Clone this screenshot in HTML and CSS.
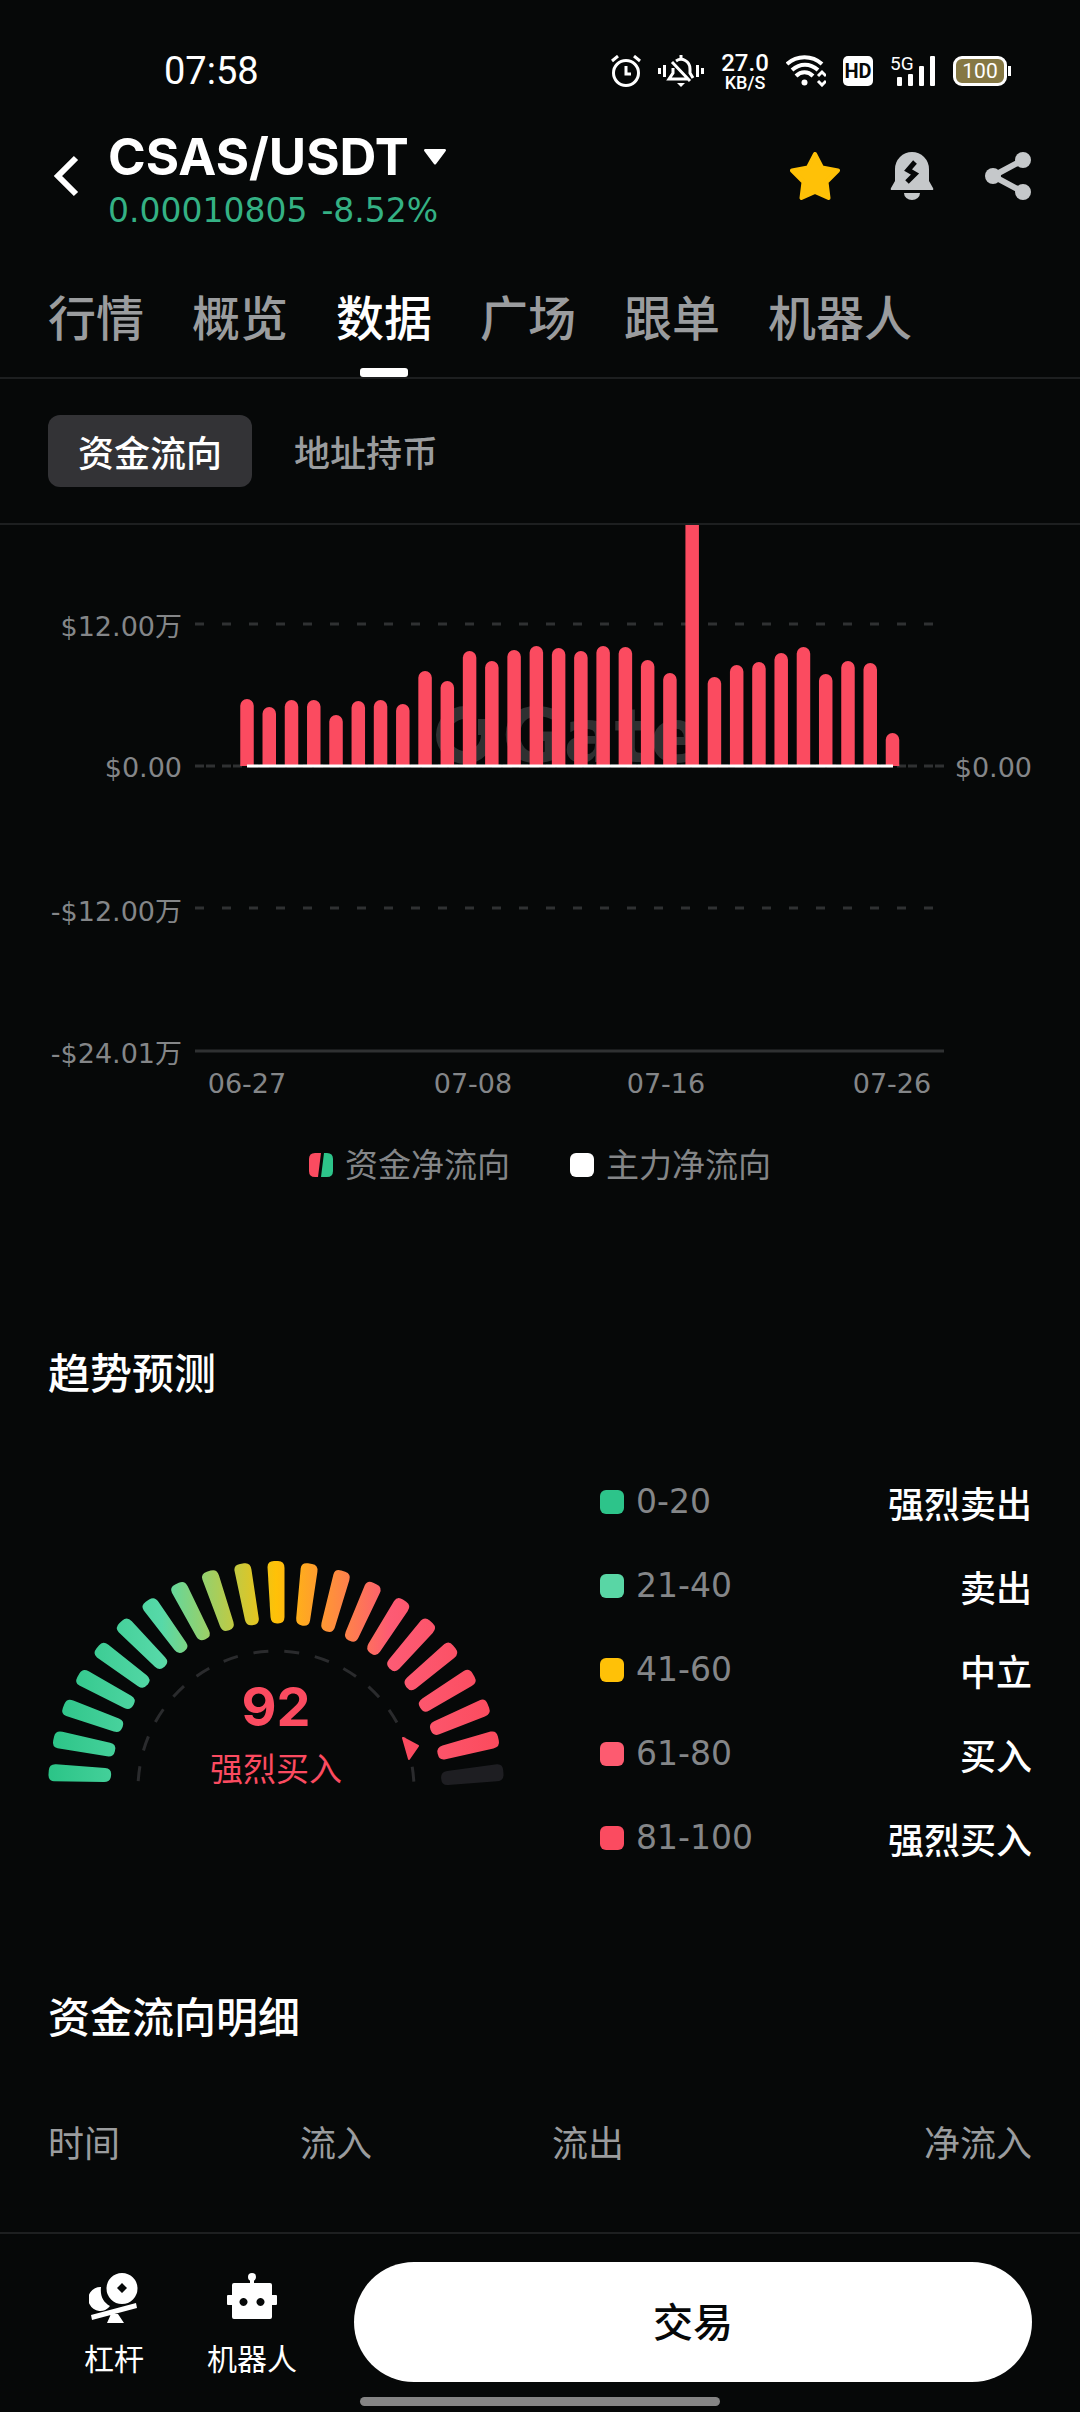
FILE: index.html
```html
<!DOCTYPE html>
<html lang="zh-CN">
<head>
  <meta charset="UTF-8" />
  <meta name="viewport" content="width=device-width, initial-scale=1.0">
  <title>CSAS/USDT - 数据</title>
  <link rel="stylesheet" href="styles.css">
</head>
<body>
  <!-- Status bar -->
  <div class="status-bar">
    <span class="clock">07:58</span>
    <div class="status-icons">
      <svg width="30" height="32" viewBox="0 0 30 32" fill="none" stroke="#fff" stroke-width="3">
        <circle cx="15" cy="18" r="12.500" />
        <path d="M15 11v8h5M1 6l6-5M29 6l-6-5" />
      </svg>
      <svg width="46" height="32" viewBox="0 0 46 32" fill="none" stroke="#fff" stroke-width="3">
        <path d="M1.500 13v6M6.500 10v12M39.500 10v12M44.500 13v6" />
        <path d="M15 13v5l-4 6h19M18 6c6-4 14 0 14 8v4l3 5M14 7l18 19" />
        <path d="M23 0v4" />
        <path d="M19 28h8l-4 4z" fill="#fff" stroke="none" />
      </svg>
      <div class="net-speed"><b>27.0</b><span>KB/S</span></div>
      <svg width="40" height="32" viewBox="0 0 40 32" fill="none" stroke="#fff" stroke-width="4">
        <path d="M1 9c10-9 25-9 35 0M6 15c8-7 18-7 26 0M10 21c5-5 12-5 17 0" />
        <circle cx="18.500" cy="27.500" r="3" fill="#fff" stroke="none" />
        <path d="M32 21l4-4 4 4M32 26l4 4 4-4" stroke-width="3" />
      </svg>
      <span class="hd">HD</span>
      <div class="signal">
        <span>5G</span>
        <svg width="40" height="30" viewBox="0 0 40 30" fill="#fff">
          <rect x="1" y="21" width="5" height="9" rx="1" />
          <rect x="12" y="18" width="5" height="12" rx="1" />
          <rect x="23" y="10" width="5" height="20" rx="1" />
          <rect x="34" y="0" width="5" height="30" rx="1" />
        </svg>
      </div>
      <span class="battery">100</span>
    </div>
  </div>

  <!-- Pair header -->
  <header class="header">
    <button class="icon-btn" aria-label="返回">
      <svg width="32" height="42" viewBox="0 0 32 42" fill="none" stroke="#fff" stroke-width="6">
        <path d="M28 3L10 21l18 18" />
      </svg>
    </button>
    <div class="pair">
      <button class="pair-name">CSAS/USDT
        <svg width="22" height="16" viewBox="0 0 22 16" fill="#fff"><path d="M1 0h20q2 1 0 3L12 15q-1 1-2 0L1 3q-2-2 0-3z" /></svg>
      </button>
      <div class="pair-price"><span>0.00010805</span><span>-8.52%</span></div>
    </div>
    <div class="header-actions">
      <button class="icon-btn" aria-label="收藏">
        <svg width="50" height="48" viewBox="0 0 50 48" fill="#ffc107" stroke="#ffc107" stroke-width="4" stroke-linejoin="round">
          <path d="M25 2l7 13.500 16 3-11.500 11.500 2 16-13.500-6-13.500 6 2-16L2 18.500l16-3z" />
        </svg>
      </button>
      <button class="icon-btn" aria-label="提醒">
        <svg width="44" height="48" viewBox="0 0 44 48" fill="#c5c8ca">
          <path d="M5 17a17 17 0 0 1 34 0v12l4 7q1 2-1 2H2q-2 0-1-2l4-7z" />
          <path d="M14 41h16a8 7 0 0 1-16 0z" />
          <path d="M25 10l-7 8 7 4-8 8" fill="none" stroke="#060808" stroke-width="5" />
        </svg>
      </button>
      <button class="icon-btn" aria-label="分享">
        <svg width="48" height="48" viewBox="0 0 48 48" fill="#c5c8ca">
          <path d="M39 8L9 24l30 16" fill="none" stroke="#c5c8ca" stroke-width="6" />
          <circle cx="9" cy="24" r="8" /><circle cx="39" cy="8" r="8" /><circle cx="39" cy="40" r="8" />
        </svg>
      </button>
    </div>
  </header>

  <nav class="tabs">
    <a href="#">行情</a>
    <a href="#">概览</a>
    <a href="#" class="active">数据</a>
    <a href="#">广场</a>
    <a href="#">跟单</a>
    <a href="#">机器人</a>
  </nav>

  <div class="sub-tabs">
    <button class="active">资金流向</button>
    <button>地址持币</button>
  </div>

  <main>
    <!-- Fund flow chart -->
    <section class="flow">
      <svg class="flow-chart" viewBox="0 0 1080 582" role="img" aria-label="资金净流向">
        <g class="watermark">
          <path d="M465 181a29 29 0 1 0 29 29h-13a16 16 0 1 1-16-16z" />
          <path d="M478 194h16v16h-16z" />
          <text x="502" y="237">Gate</text>
        </g>
        <g class="grid">
          <path d="M195 99h740M195 383h740" stroke-dasharray="9 18" />
          <path d="M195 241h749" stroke-dasharray="9 2 9 7" />
          <path d="M195 526h749" />
        </g>
        <g id="bars" class="bars"></g>
        <path class="main-line" d="M247 241h646" />
        <g class="y-labels">
          <text x="182" y="111">$12.00万</text>
          <text x="182" y="252">$0.00</text>
          <text x="182" y="396">-$12.00万</text>
          <text x="182" y="538">-$24.01万</text>
          <text x="1032" y="252">$0.00</text>
        </g>
        <g class="x-labels">
          <text x="247" y="568">06-27</text>
          <text x="473" y="568">07-08</text>
          <text x="666" y="568">07-16</text>
          <text x="892" y="568">07-26</text>
        </g>
      </svg>
      <div class="flow-legend">
        <span>
          <svg width="24" height="24" viewBox="0 0 24 24">
            <path d="M6 0h6L9 24H6q-6 0-6-6V6q0-6 6-6z" fill="#fb4b60" />
            <path d="M15 0h3q6 0 6 6v12q0 6-6 6h-6z" fill="#2dc48a" />
          </svg>
          资金净流向
        </span>
        <span><i class="swatch white"></i>主力净流向</span>
      </div>
    </section>

    <!-- Trend gauge -->
    <section class="trend">
      <h2>趋势预测</h2>
      <div class="trend-body">
        <div class="gauge">
          <svg viewBox="0 0 456 228">
            <defs>
              <linearGradient id="scale" gradientUnits="userSpaceOnUse" x1="0" y1="0" x2="456" y2="0">
                <stop offset="0" stop-color="#2bc487" />
                <stop offset="0.250" stop-color="#57d9a8" />
                <stop offset="0.500" stop-color="#ffc107" />
                <stop offset="0.750" stop-color="#fd5b74" />
                <stop offset="1" stop-color="#fb4a5c" />
              </linearGradient>
            </defs>
            <g id="ticks"></g>
            <path class="gauge-arc" d="M90 228A138 138 0 0 1 366 228" />
            <path d="M355 177l15 8-9 13z" fill="#fb4b60" stroke="#fb4b60" stroke-width="2" stroke-linejoin="round" />
          </svg>
          <div class="gauge-value"><strong>92</strong><span>强烈买入</span></div>
        </div>
        <ul class="levels">
          <li><i class="swatch green"></i>0-20<b>强烈卖出</b></li>
          <li><i class="swatch mint"></i>21-40<b>卖出</b></li>
          <li><i class="swatch yellow"></i>41-60<b>中立</b></li>
          <li><i class="swatch pink"></i>61-80<b>买入</b></li>
          <li><i class="swatch red"></i>81-100<b>强烈买入</b></li>
        </ul>
      </div>
    </section>

    <!-- Flow details -->
    <section class="details">
      <h2>资金流向明细</h2>
      <table>
        <thead>
          <tr><th>时间</th><th>流入</th><th>流出</th><th>净流入</th></tr>
        </thead>
      </table>
    </section>
  </main>

  <footer class="bottom-bar">
    <a href="#">
      <svg width="50" height="52" viewBox="0 0 50 52" fill="#fff">
        <path d="M33 1a15 15 0 1 1 0 31 15 15 0 1 1 0-31zm0 10l-5 5 5 5 5-5z" fill-rule="evenodd" />
        <path d="M12 15c-1 9 2 15 9 19a12 12 0 1 1-9-19z" />
        <path d="M2 43l45-12 1 5-45 12zM22 42h7l6 9H18z" />
      </svg>
      杠杆
    </a>
    <a href="#">
      <svg width="50" height="52" viewBox="0 0 50 52" fill="#fff">
        <circle cx="25" cy="5" r="4" />
        <path d="M23 7h4v5h-4z" />
        <path fill-rule="evenodd" d="M7 11h36q2 0 2 2v10h4q1 0 1 1v8q0 1-1 1h-4v12q0 2-2 2H7q-2 0-2-2V33H1q-1 0-1-1v-8q0-1 1-1h4V13q0-2 2-2zm9 15a4 4 0 1 0 1 0zm17 0a4 4 0 1 0 1 0z" />
      </svg>
      机器人
    </a>
    <button class="trade">交易</button>
    <div class="home-indicator"></div>
  </footer>

  <script>
    const svgNS = 'http://www.w3.org/2000/svg';

    function addPath(parent, d, fill) {
      const path = document.createElementNS(svgNS, 'path');
      path.setAttribute('d', d);
      if (fill) path.setAttribute('fill', fill);
      parent.appendChild(path);
    }

    // Daily net flow, in units of 10k USD
    const flow = [
      5.64, 4.97, 5.56, 5.56, 4.29, 5.47, 5.56, 5.22, 8, 7.16,
      9.68, 8.84, 9.77, 10.1, 9.94, 9.68, 10.1, 10.02, 8.93, 7.83,
      24.01, 7.49, 8.51, 8.76, 9.52, 10.02, 7.75, 8.84, 8.67, 2.78
    ];
    const bars = document.getElementById('bars');
    const zeroY = 241;
    flow.forEach((value, i) => {
      const x = 247 + i * 645.5 / 29 - 6.75;
      const top = zeroY - value * 142.5 / 12;
      addPath(bars, `M${x} ${zeroY}V${top + 6.75}a6.75 6.75 0 0 1 13.5 0V${zeroY}z`);
    });

    // Gauge ticks, 21 tapered blades from left to right
    const ticks = document.getElementById('ticks');
    const blade = [
      [-8.5, -222], [-8.5, -228], [-2, -228], [2, -228], [8.5, -228], [8.5, -221],
      [8.5, -172], [8.5, -165.5], [2, -165.5], [1, -165.5], [-5, -165.5], [-5.5, -172]
    ];
    for (let i = 0; i < 21; i++) {
      const a = (i - 10) * 8.58 * Math.PI / 180;
      const p = blade.map(([x, y]) =>
        (228 + x * Math.cos(a) - y * Math.sin(a)).toFixed(1) + ' ' +
        (228 + x * Math.sin(a) + y * Math.cos(a)).toFixed(1));
      const d = `M${p[0]}Q${p[1]} ${p[2]}L${p[3]}Q${p[4]} ${p[5]}L${p[6]}Q${p[7]} ${p[8]}L${p[9]}Q${p[10]} ${p[11]}z`;
      addPath(ticks, d, i < 20 ? 'url(#scale)' : '#1e1e22');
    }
  </script>
</body>
</html>
```
FILE: styles.css
```css
* {
  box-sizing: border-box;
}

body {
  display: flex;
  flex-direction: column;
  min-height: 100vh;
  margin: 0;
  background-color: #060808;
  color: #fff;
  font-family: Inter, "Noto Sans CJK SC", sans-serif;
}

button {
  padding: 0;
  border: none;
  background: none;
  color: inherit;
  font: inherit;
  cursor: pointer;
}

a {
  color: inherit;
  text-decoration: none;
}

svg {
  display: block;
}

h2 {
  margin: 0;
  font-size: 42px;
  line-height: 60px;
  font-weight: 500;
}

/* status bar */
.status-bar {
  display: flex;
  align-items: center;
  justify-content: space-between;
  height: 108px;
  padding: 34px 73px 0 164px;
}

.clock {
  font-family: Roboto, sans-serif;
  font-size: 38px;
}

.status-icons {
  display: flex;
  align-items: center;
  gap: 17px;
}

.net-speed {
  display: flex;
  flex-direction: column;
  align-items: center;
  width: 48px;
  font-family: Roboto, sans-serif;
  font-size: 18px;
  line-height: 16px;
  font-weight: 500;
}

.net-speed b {
  font-size: 24px;
  line-height: 24px;
  font-weight: 500;
}

.hd {
  width: 30px;
  border-radius: 5px;
  background-color: #fff;
  color: #060808;
  font-family: Roboto, sans-serif;
  font-size: 20px;
  line-height: 30px;
  font-weight: 700;
  text-align: center;
}

.signal {
  position: relative;
  padding-left: 6px;
}

.signal span {
  position: absolute;
  top: 0;
  left: 0;
  font-family: Roboto, sans-serif;
  font-size: 19px;
  line-height: 16px;
}

.battery {
  position: relative;
  width: 54px;
  border: 3px solid #fff;
  border-radius: 9px;
  background-color: #857844;
  font-family: Roboto, sans-serif;
  font-size: 21px;
  line-height: 24px;
  text-align: center;
}

.battery::after {
  content: "";
  position: absolute;
  top: 7px;
  right: -7px;
  width: 3px;
  height: 10px;
  background-color: #fff;
}

/* header */
.header {
  display: flex;
  align-items: center;
  height: 152px;
  padding: 0 48px 17px;
}

.pair {
  margin: 10px 0 0 28px;
}

.pair-name {
  display: flex;
  align-items: center;
  gap: 15px;
  font-size: 51px;
  line-height: 60px;
  font-weight: 700;
}

.pair-price {
  display: flex;
  gap: 14px;
  color: #34b184;
  font-family: "DejaVu Sans", sans-serif;
  font-size: 33px;
  line-height: 48px;
}

.header-actions {
  display: flex;
  gap: 50px;
  margin-left: auto;
}

/* tabs */
.tabs {
  display: flex;
  gap: 48px;
  padding: 0 48px;
  border-bottom: 2px solid #1d1f20;
}

.tabs a {
  position: relative;
  color: #9a9c9e;
  font-size: 48px;
  line-height: 117px;
  font-weight: 500;
}

.tabs .active {
  color: #fff;
}

.tabs .active::after {
  content: "";
  position: absolute;
  bottom: 0;
  left: 50%;
  width: 48px;
  height: 9px;
  margin-left: -24px;
  border-radius: 3px;
  background-color: #fff;
}

.sub-tabs {
  display: flex;
  gap: 12px;
  padding: 36px 48px;
  border-bottom: 2px solid #1d1f20;
}

.sub-tabs button {
  padding: 6px 30px 0;
  border-radius: 12px;
  color: #9a9c9e;
  font-size: 36px;
  line-height: 66px;
  font-weight: 500;
}

.sub-tabs .active {
  background-color: #333336;
  color: #fff;
}

/* fund flow chart */
.flow-chart {
  width: 100%;
}

.watermark {
  fill: #2f3031;
  font-family: "DejaVu Sans", sans-serif;
  font-size: 75px;
  font-weight: 700;
}

.grid {
  fill: none;
  stroke: #2f3132;
  stroke-width: 3;
}

.bars {
  fill: #fb4b60;
}

.main-line {
  stroke: #fff;
  stroke-width: 3;
}

.y-labels,
.x-labels {
  fill: #848688;
  font-family: "DejaVu Sans", "Noto Sans CJK SC", sans-serif;
  font-size: 27px;
}

.y-labels {
  text-anchor: end;
}

.x-labels {
  text-anchor: middle;
}

.flow-legend {
  display: flex;
  justify-content: center;
  gap: 60px;
  margin-top: 34px;
  color: #848688;
  font-size: 33px;
  line-height: 48px;
}

.flow-legend span {
  display: flex;
  align-items: center;
  gap: 12px;
}

.swatch {
  width: 24px;
  height: 24px;
  border-radius: 6px;
}

.white { background-color: #fff; }
.green { background-color: #2dc48a; }
.mint { background-color: #59d6a5; }
.yellow { background-color: #ffc107; }
.pink { background-color: #fd5b70; }
.red { background-color: #fb4b60; }

/* trend gauge */
.trend {
  padding: 155px 48px 0;
}

.trend-body {
  display: flex;
  align-items: center;
  justify-content: space-between;
  margin-top: 56px;
}

.gauge {
  position: relative;
  width: 456px;
  margin-top: 10px;
}

.gauge-arc {
  fill: none;
  stroke: #2a2b2d;
  stroke-width: 3;
  stroke-dasharray: 15 16;
  stroke-dashoffset: -8;
}

.gauge-value {
  position: absolute;
  right: 0;
  bottom: 0;
  left: 0;
  display: flex;
  flex-direction: column;
  align-items: center;
  color: #fb4b60;
  font-size: 33px;
  line-height: 40px;
}

.gauge-value strong {
  font-size: 54px;
  line-height: 84px;
}

.levels {
  width: 432px;
  margin: 0;
  padding: 0;
  list-style: none;
}

.levels li {
  display: flex;
  align-items: center;
  gap: 12px;
  color: #848688;
  font-family: "DejaVu Sans", sans-serif;
  font-size: 33px;
  line-height: 84px;
}

.levels b {
  margin-left: auto;
  padding-top: 6px;
  color: #fff;
  font-family: Inter, "Noto Sans CJK SC", sans-serif;
  font-size: 36px;
  line-height: 60px;
  font-weight: 500;
}

/* details table */
.details {
  padding: 108px 48px 0;
}

.details table {
  width: 100%;
  margin-top: 60px;
  border-collapse: collapse;
  table-layout: fixed;
}

.details th {
  width: 252px;
  padding: 0;
  color: #9a9c9e;
  font-size: 36px;
  line-height: 72px;
  font-weight: 400;
  text-align: left;
}

.details th:last-child {
  width: auto;
  text-align: right;
}

/* bottom bar */
.bottom-bar {
  position: relative;
  display: flex;
  align-items: flex-start;
  height: 180px;
  margin-top: auto;
  padding: 28px 48px 0 45px;
  border-top: 2px solid #1d1f20;
}

.bottom-bar a {
  display: flex;
  flex-direction: column;
  align-items: center;
  gap: 14px;
  width: 138px;
  padding-top: 10px;
  font-size: 30px;
  line-height: 42px;
}

.trade {
  flex: 1;
  height: 120px;
  margin-left: 33px;
  padding-bottom: 4px;
  border-radius: 60px;
  background-color: #fff;
  color: #060808;
  font-size: 40px;
  font-weight: 500;
}

.home-indicator {
  position: absolute;
  bottom: 6px;
  left: 50%;
  width: 360px;
  height: 9px;
  margin-left: -180px;
  border-radius: 5px;
  background-color: #858585;
}
```
